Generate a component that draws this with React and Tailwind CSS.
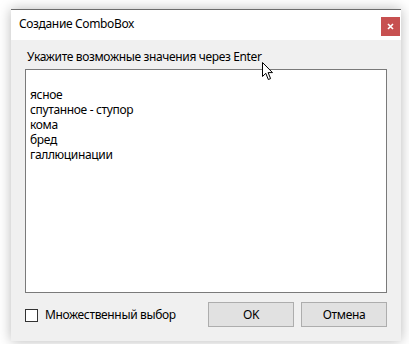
import React from "react";

const items = ["", "ясное", "спутанное - ступор", "кома", "бред", "галлюцинации"];

const Cursor = () => (
  <svg
    className="absolute left-[262px] top-[62px]"
    width="14"
    height="19"
    viewBox="0 0 14 19"
  >
    <path
      d="M0.5 0.5 L0.5 14.5 L3.8 11.3 L6.3 17.5 L8.6 16.6 L6.1 10.6 L10.5 10.6 Z"
      fill="#fff"
      stroke="#000"
      strokeWidth="1"
    />
  </svg>
);

export default function App() {
  return (
    <div
      className="relative w-[409px] h-[344px] bg-white pt-[9px] pl-[11px] text-[12px] tracking-[-0.35px] text-black"
      style={{ fontFamily: '"Noto Sans", "Open Sans", sans-serif' }}
    >
      <div className="w-[390px] h-[332px] flex flex-col border-t border-[#6b6b6b] shadow-[0_0_12px_rgba(0,0,0,0.28)]">
        <div className="h-[30px] bg-white flex items-start justify-between">
          <span className="pl-[8px] pt-[6px] leading-[16px]">Создание ComboBox</span>
          <div className="mt-[7px] w-[19px] h-[19px] bg-[#c75050] flex items-center justify-center mr-[1px]">
            <svg width="7" height="7" viewBox="0 0 7 7">
              <path d="M1 1 L6 6 M6 1 L1 6" stroke="#fff" strokeWidth="1.6" />
            </svg>
          </div>
        </div>
        <div className="flex-1 bg-[#f0f0f0] px-[14px] pt-[9px] flex flex-col">
          <div className="pl-[2px] leading-[16px] mb-[4px]">
            Укажите возможные значения через Enter
          </div>
          <div className="h-[224px] bg-white border border-[#7a7a7a] pl-[4px] pt-[2px] leading-[15px]">
            {items.map((t, i) => (
              <div key={i} className="h-[15px] whitespace-pre">
                {t}
              </div>
            ))}
          </div>
          <div className="mt-[9px] flex items-center">
            <div className="w-[13px] h-[13px] bg-white border border-[#333] mt-[1px]" />
            <span className="ml-[7px] leading-[16px]">Множественный выбор</span>
            <div className="ml-auto flex gap-[7px]">
              <button className="w-[86px] h-[25px] bg-[#e1e1e1] border border-[#adadad] leading-[16px]">
                OK
              </button>
              <button className="w-[86px] h-[25px] bg-[#e1e1e1] border border-[#adadad] leading-[16px]">
                Отмена
              </button>
            </div>
          </div>
        </div>
      </div>
      <Cursor />
    </div>
  );
}
